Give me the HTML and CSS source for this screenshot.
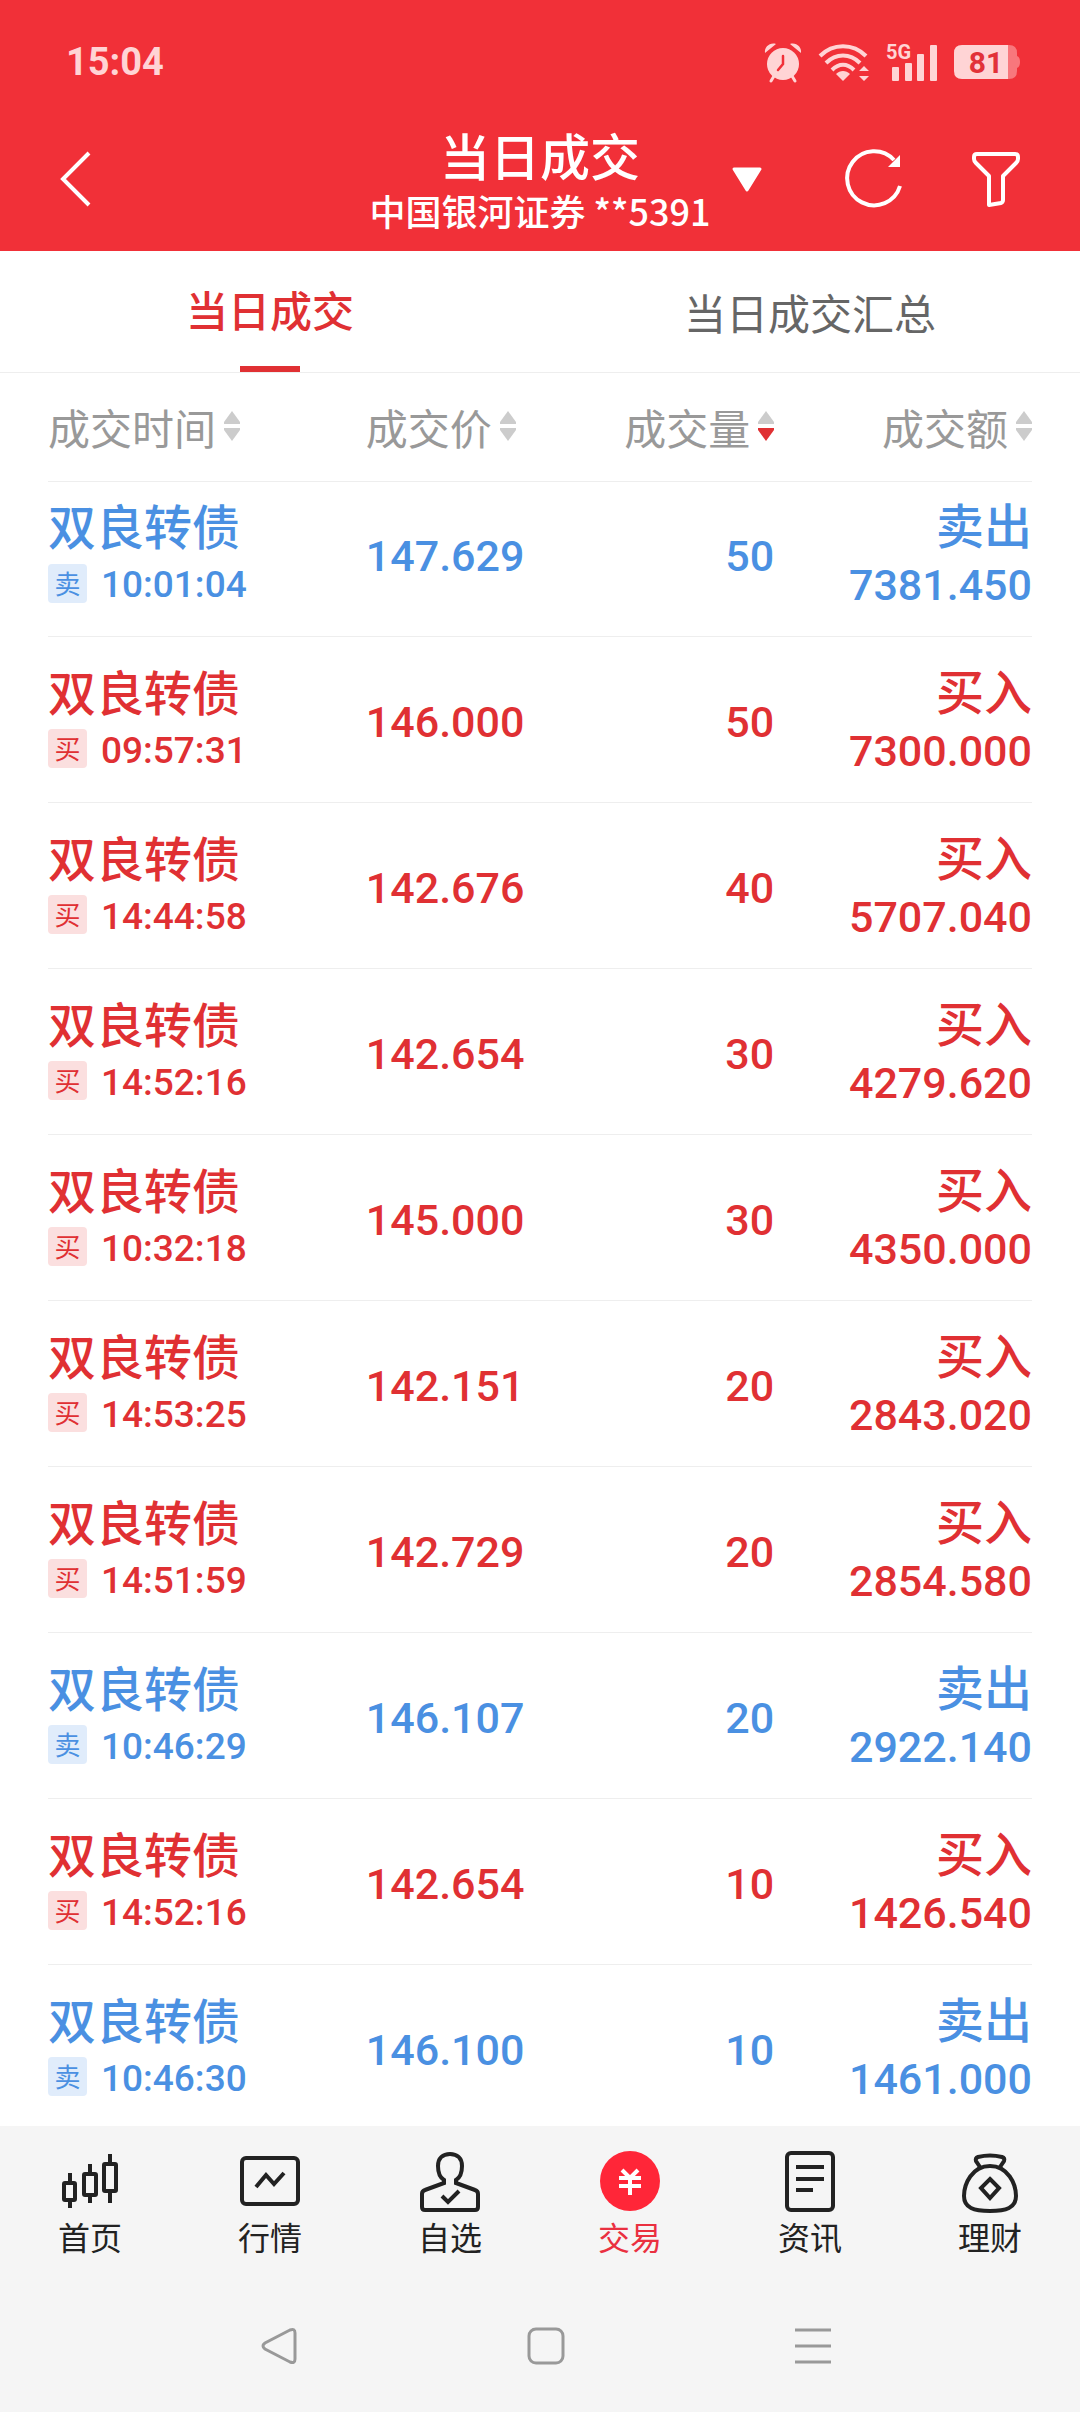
FILE: index.html
```html
<!DOCTYPE html>
<html lang="zh-CN">
<head>
    <meta charset="UTF-8">
    <meta name="viewport" content="width=device-width, initial-scale=1.0">
    <title>当日成交</title>
    <link rel="stylesheet" href="styles.css">
</head>
<body>

<header>
    <div class="status-bar">
        <span class="clock">15:04</span>
        <div class="status-icons">
            <svg class="alarm" width="38" height="40" viewBox="0 0 38 40">
                <path d="M1 11C0 5 6 0 12 2L1 11ZM37 11C38 5 32 0 26 2L37 11Z" fill="#ffd4d5"/>
                <circle cx="19" cy="22" r="16" fill="#ffd4d5"/>
                <path d="M10 34L7 39M28 34L31 39" stroke="#ffd4d5" stroke-width="3" stroke-linecap="round"/>
                <path d="M19 14V22L14 28" fill="none" stroke="#f13038" stroke-width="2.5" stroke-linecap="round"/>
            </svg>
            <svg class="wifi" width="52" height="40" viewBox="0 0 52 40">
                <g fill="none" stroke="#ffd4d5" stroke-width="4">
                    <path d="M2 14C15 1 35 1 48 14"/>
                    <path d="M8 21C18 11 32 11 42 21"/>
                    <path d="M14 28C21 21 29 21 36 28"/>
                </g>
                <path d="M18 32C22 28 28 28 32 32L25 39Z" fill="#ffd4d5"/>
                <path d="M41 29L46 24L51 29ZM41 34L46 39L51 34Z" fill="#ffd4d5"/>
            </svg>
            <svg class="signal" width="52" height="40" viewBox="0 0 52 40">
                <text x="0" y="17">5G</text>
                <g fill="#ffd4d5">
                    <rect x="6" y="25" width="7" height="14" rx="1"/>
                    <rect x="19" y="21" width="7" height="18" rx="1"/>
                    <rect x="31" y="12" width="7" height="27" rx="1"/>
                    <rect x="44" y="3" width="7" height="36" rx="1"/>
                </g>
            </svg>
            <svg class="battery" width="66" height="34" viewBox="0 0 66 34">
                <path d="M54 0H55Q63 0 63 8V11Q66 12 66 17Q66 22 63 23V26Q63 34 55 34H54Z" fill="#f8777c"/>
                <path d="M54 0H8Q0 0 0 8V26Q0 34 8 34H54Z" fill="#ffd4d5"/>
                <text x="32" y="28" text-anchor="middle">81</text>
            </svg>
        </div>
    </div>

    <div class="title-bar">
        <button class="back" aria-label="返回">
            <svg width="32" height="56" viewBox="0 0 32 56">
                <path d="M29 1L3 27L29 53" fill="none" stroke="#fff" stroke-width="4"/>
            </svg>
        </button>
        <div class="title">
            <h1>当日成交</h1>
            <p>中国银河证券 **5391</p>
        </div>
        <div class="title-actions">
            <button aria-label="切换账户">
                <svg width="30" height="26" viewBox="0 0 30 26">
                    <path d="M2 2H28L15 23Z" fill="#fff" stroke="#fff" stroke-width="3" stroke-linejoin="round"/>
                </svg>
            </button>
            <button class="refresh" aria-label="刷新">
                <svg width="58" height="60" viewBox="0 0 58 60">
                    <path d="M54 36A27 27 0 1 1 48 10" fill="none" stroke="#fff" stroke-width="4"/>
                    <path d="M54 5V17H42Z" fill="#fff"/>
                </svg>
            </button>
            <button aria-label="筛选">
                <svg width="48" height="56" viewBox="0 0 48 56">
                    <path d="M5 2H43Q46 2 46 5V7Q46 9 44 11L31 24V48Q31 50 29 51L17 53V24L4 11Q2 9 2 7V5Q2 2 5 2Z" fill="none" stroke="#fff" stroke-width="4" stroke-linejoin="round"/>
                </svg>
            </button>
        </div>
    </div>
</header>

<nav class="tabs">
    <a href="#" class="tab active">当日成交</a>
    <a href="#" class="tab">当日成交汇总</a>
</nav>

<main>
    <table class="deals">
        <thead>
            <tr>
                <th class="col-time"><button>成交时间<svg class="sort" width="16" height="30" viewBox="0 0 16 30"><path class="up" d="M8 0L16 11V13H0V11Z"/><path class="down" d="M8 30L16 19V17H0V19Z"/></svg></button></th>
                <th class="col-price"><button>成交价<svg class="sort" width="16" height="30" viewBox="0 0 16 30"><path class="up" d="M8 0L16 11V13H0V11Z"/><path class="down" d="M8 30L16 19V17H0V19Z"/></svg></button></th>
                <th class="col-qty"><button>成交量<svg class="sort desc" width="16" height="30" viewBox="0 0 16 30"><path class="up" d="M8 0L16 11V13H0V11Z"/><path class="down" d="M8 30L16 19V17H0V19Z"/></svg></button></th>
                <th class="col-amount"><button>成交额<svg class="sort" width="16" height="30" viewBox="0 0 16 30"><path class="up" d="M8 0L16 11V13H0V11Z"/><path class="down" d="M8 30L16 19V17H0V19Z"/></svg></button></th>
            </tr>
        </thead>
        <tbody>
            <tr class="sell">
                <td><div class="name">双良转债</div><div class="time"><span class="badge">卖</span>10:01:04</div></td>
                <td class="num">147.629</td>
                <td class="num qty">50</td>
                <td class="amount"><div class="name">卖出</div><div class="num">7381.450</div></td>
            </tr>
            <tr class="buy">
                <td><div class="name">双良转债</div><div class="time"><span class="badge">买</span>09:57:31</div></td>
                <td class="num">146.000</td>
                <td class="num qty">50</td>
                <td class="amount"><div class="name">买入</div><div class="num">7300.000</div></td>
            </tr>
            <tr class="buy">
                <td><div class="name">双良转债</div><div class="time"><span class="badge">买</span>14:44:58</div></td>
                <td class="num">142.676</td>
                <td class="num qty">40</td>
                <td class="amount"><div class="name">买入</div><div class="num">5707.040</div></td>
            </tr>
            <tr class="buy">
                <td><div class="name">双良转债</div><div class="time"><span class="badge">买</span>14:52:16</div></td>
                <td class="num">142.654</td>
                <td class="num qty">30</td>
                <td class="amount"><div class="name">买入</div><div class="num">4279.620</div></td>
            </tr>
            <tr class="buy">
                <td><div class="name">双良转债</div><div class="time"><span class="badge">买</span>10:32:18</div></td>
                <td class="num">145.000</td>
                <td class="num qty">30</td>
                <td class="amount"><div class="name">买入</div><div class="num">4350.000</div></td>
            </tr>
            <tr class="buy">
                <td><div class="name">双良转债</div><div class="time"><span class="badge">买</span>14:53:25</div></td>
                <td class="num">142.151</td>
                <td class="num qty">20</td>
                <td class="amount"><div class="name">买入</div><div class="num">2843.020</div></td>
            </tr>
            <tr class="buy">
                <td><div class="name">双良转债</div><div class="time"><span class="badge">买</span>14:51:59</div></td>
                <td class="num">142.729</td>
                <td class="num qty">20</td>
                <td class="amount"><div class="name">买入</div><div class="num">2854.580</div></td>
            </tr>
            <tr class="sell">
                <td><div class="name">双良转债</div><div class="time"><span class="badge">卖</span>10:46:29</div></td>
                <td class="num">146.107</td>
                <td class="num qty">20</td>
                <td class="amount"><div class="name">卖出</div><div class="num">2922.140</div></td>
            </tr>
            <tr class="buy">
                <td><div class="name">双良转债</div><div class="time"><span class="badge">买</span>14:52:16</div></td>
                <td class="num">142.654</td>
                <td class="num qty">10</td>
                <td class="amount"><div class="name">买入</div><div class="num">1426.540</div></td>
            </tr>
            <tr class="sell">
                <td><div class="name">双良转债</div><div class="time"><span class="badge">卖</span>10:46:30</div></td>
                <td class="num">146.100</td>
                <td class="num qty">10</td>
                <td class="amount"><div class="name">卖出</div><div class="num">1461.000</div></td>
            </tr>
        </tbody>
    </table>
</main>

<footer>
    <nav class="bottom-nav">
        <a href="#">
            <svg width="60" height="64" viewBox="0 0 60 64">
                <rect x="4" y="33" width="11" height="17" rx="1"/>
                <rect x="24" y="24" width="12" height="21" rx="1"/>
                <rect x="44" y="14" width="12" height="27" rx="1"/>
                <path d="M10 23V32M10 51V58M30 14V24M30 46V53M50 4V13M50 42V53"/>
            </svg>
            首页
        </a>
        <a href="#">
            <svg width="60" height="64" viewBox="0 0 60 64">
                <rect x="2" y="8" width="56" height="46" rx="4"/>
                <path d="M16 37L26 25L34 34L44 23"/>
            </svg>
            行情
        </a>
        <a href="#">
            <svg width="60" height="64" viewBox="0 0 60 64">
                <path d="M24 33V30C19 27 18 22 18 16C18 8 23 4 30 4C37 4 42 8 42 16C42 22 41 27 36 30V33L55 40Q58 41 58 44V57Q58 60 55 60H5Q2 60 2 57V44Q2 41 5 40Z"/>
                <path d="M22 46L28 52L39 41"/>
            </svg>
            自选
        </a>
        <a href="#" class="active">
            <svg width="60" height="64" viewBox="0 0 60 64">
                <circle class="coin" cx="30" cy="31" r="30"/>
                <path class="yuan" d="M22 20L30 28L38 20M19 28H41M19 36H41M30 27V45"/>
            </svg>
            交易
        </a>
        <a href="#">
            <svg width="60" height="64" viewBox="0 0 60 64">
                <rect x="7" y="3" width="46" height="57" rx="4"/>
                <path d="M16 17H44M16 29H44M16 40H33"/>
            </svg>
            资讯
        </a>
        <a href="#">
            <svg width="60" height="64" viewBox="0 0 60 64">
                <path d="M20 17L16 11Q15 8 18 7Q30 4 42 7Q45 8 44 11L40 17"/>
                <path d="M30 16C12 16 4 34 4 46C4 58 14 61 30 61C46 61 56 58 56 46C56 34 48 16 30 16Z"/>
                <path d="M30 29L39 38L30 48L21 38Z"/>
            </svg>
            理财
        </a>
    </nav>
    <div class="system-nav">
        <button aria-label="后退">
            <svg width="36" height="38" viewBox="0 0 36 38">
                <path d="M29 3L4 16Q0 19 4 22L29 35Q34 37 34 32V6Q34 1 29 3Z"/>
            </svg>
        </button>
        <button aria-label="主屏幕">
            <svg width="38" height="38" viewBox="0 0 38 38">
                <rect x="2" y="2" width="34" height="34" rx="7"/>
            </svg>
        </button>
        <button aria-label="最近任务">
            <svg width="36" height="38" viewBox="0 0 36 38">
                <path d="M0 3H36M0 19H36M0 35H36"/>
            </svg>
        </button>
    </div>
</footer>

</body>
</html>
```
FILE: styles.css
```css
* {
    box-sizing: border-box;
}

body {
    font-family: Roboto, "Noto Sans CJK SC", sans-serif;
    margin: 0;
    height: 100vh;
    display: flex;
    flex-direction: column;
    background-color: #fff;
    color: #222;
}

button {
    background: none;
    border: none;
    padding: 0;
    font: inherit;
    color: inherit;
    cursor: pointer;
}

svg {
    display: block;
    overflow: visible;
}

a {
    color: inherit;
    text-decoration: none;
}

header {
    background-color: #f13038;
    color: #fff;
}

.status-bar {
    display: flex;
    justify-content: space-between;
    align-items: center;
    height: 108px;
    padding: 16px 60px 0 66px;
}

.clock {
    color: #ffd4d5;
    font-size: 38px;
    font-weight: bold;
}

.status-icons {
    display: flex;
    align-items: center;
    gap: 16px;
}

.signal text {
    font: bold 20px Roboto, sans-serif;
    fill: #ffd4d5;
}

.battery text {
    font: bold 30px Roboto, sans-serif;
    fill: #e23238;
}

.title-bar {
    display: grid;
    grid-template-columns: 1fr auto 1fr;
    align-items: center;
    height: 143px;
    padding: 0 60px;
}

.back {
    justify-self: start;
}

.title {
    text-align: center;
    font-family: "Noto Sans CJK SC", sans-serif;
}

.title h1 {
    margin: 0;
    font-size: 50px;
    font-weight: 500;
    line-height: 60px;
}

.title p {
    margin: 0;
    font-size: 36px;
    font-weight: 500;
    line-height: 52px;
}

.title-actions {
    display: flex;
    align-items: center;
    justify-content: flex-end;
    gap: 68px;
}

.refresh {
    margin-left: 16px;
}

.tabs {
    display: flex;
    height: 122px;
    border-bottom: 1px solid #eee;
}

.tab {
    flex: 1;
    display: flex;
    align-items: center;
    justify-content: center;
    position: relative;
    font-size: 42px;
    color: #666;
}

.tab.active {
    padding-bottom: 6px;
    color: #e03033;
    font-weight: 500;
}

.tab.active::after {
    content: "";
    position: absolute;
    bottom: 0;
    left: 50%;
    width: 60px;
    margin-left: -30px;
    height: 6px;
    background-color: #e03033;
}

main {
    flex: 1;
    min-height: 0;
    overflow: hidden;
    padding: 0 48px;
}

.deals {
    width: 100%;
    table-layout: fixed;
    border-collapse: separate;
    border-spacing: 0;
}

.deals th,
.deals td {
    padding: 0;
    border-bottom: 1px solid #eee;
    text-align: left;
}

.deals th {
    height: 109px;
    padding-bottom: 2px;
    font-size: 42px;
    font-weight: normal;
    color: #999;
}

.deals th button {
    display: inline-flex;
    align-items: center;
    gap: 8px;
}

.col-time {
    width: 32.3%;
}

.col-price {
    width: 20%;
}

.col-qty {
    width: 21.5%;
}

.deals .col-qty,
.deals .col-amount,
.deals .qty,
.deals .amount {
    text-align: right;
}

.sort {
    fill: #ccc;
}

.sort.desc .down {
    fill: #e03033;
}

.deals td {
    height: 166px;
    padding-top: 4px;
    vertical-align: middle;
}

.deals tbody tr:first-child td {
    height: 155px;
    padding-bottom: 10px;
}

.name {
    font-size: 48px;
    font-weight: 500;
    line-height: 58px;
}

.num {
    font-size: 43px;
    font-weight: 500;
    line-height: 56px;
}

.time {
    display: flex;
    align-items: center;
    gap: 14px;
    font-size: 37px;
    font-weight: 500;
    line-height: 54px;
}

.badge {
    width: 39px;
    height: 39px;
    margin-bottom: 4px;
    border-radius: 4px;
    font-family: "Noto Sans CJK SC", sans-serif;
    font-size: 26px;
    font-weight: normal;
    line-height: 38px;
    text-align: center;
}

.buy {
    color: #e03033;
}

.sell {
    color: #4a90e2;
}

.buy .badge {
    background-color: #fbdfdf;
}

.sell .badge {
    background-color: #e0ecfb;
}

footer {
    background-color: #f5f5f5;
}

.bottom-nav {
    display: flex;
    padding-top: 24px;
}

.bottom-nav a {
    flex: 1;
    display: flex;
    flex-direction: column;
    align-items: center;
    font-size: 32px;
    line-height: 50px;
}

.bottom-nav svg {
    fill: none;
    stroke: #222;
    stroke-width: 4;
}

.bottom-nav .active {
    color: #ea3040;
}

.bottom-nav .coin {
    fill: #ff2638;
    stroke: none;
}

.bottom-nav .yuan {
    stroke: #fff;
}

.system-nav {
    display: flex;
    height: 148px;
    padding: 16px 134px 0 145px;
}

.system-nav button {
    flex: 1;
    display: flex;
    align-items: center;
    justify-content: center;
}

.system-nav svg {
    fill: none;
    stroke: #999;
    stroke-width: 3;
}
```
